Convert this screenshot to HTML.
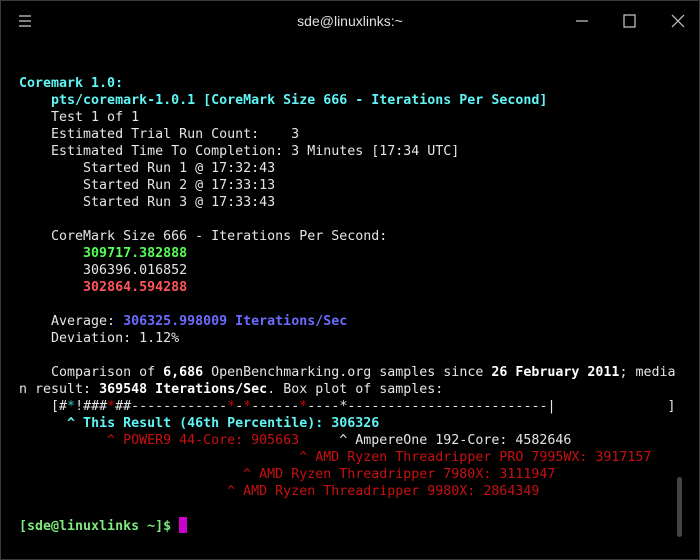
<!DOCTYPE html>
<html><head><meta charset="utf-8"><style>
html,body{margin:0;padding:0;background:#000;}
body{width:700px;height:560px;position:relative;overflow:hidden;border:1px solid #3a3a3a;box-sizing:border-box;}
.title{position:absolute;left:0;top:0;width:698px;height:40px;color:#e0e0e0;font:14px "Liberation Sans",sans-serif;}
.title .t{position:absolute;left:0;right:0;top:12px;text-align:center;}
pre{position:absolute;left:18px;top:74px;margin:0;font-family:"DejaVu Sans Mono","Liberation Mono",monospace;font-size:13.3px;line-height:17px;color:#e5e5e5;}
.c{color:#5ff5f5;font-weight:bold}
.g{color:#55ff55;font-weight:bold}
.r{color:#ff5555;font-weight:bold}
.b{color:#6b6bff;font-weight:bold}
.w{color:#fff;font-weight:bold}
.d{color:#c81010}
.p{color:#7de87d;font-weight:bold}
.cur{display:inline-block;width:8px;height:16px;background:#cc00cc;vertical-align:-3px}
.sb{position:absolute;left:676px;top:476px;width:5px;height:60px;background:#444;border-radius:3px}
</style></head><body>
<div class="title">
<svg style="position:absolute;left:17px;top:13px" width="14" height="14"><path d="M1 2H13M1 7H13M1 12H13" stroke="#ccc" stroke-width="1.2"/></svg>
<div class="t">sde@linuxlinks:~</div>
<svg style="position:absolute;left:574px;top:13px" width="14" height="14"><path d="M1 7H13" stroke="#ccc" stroke-width="1.2"/></svg>
<svg style="position:absolute;left:622px;top:13px" width="14" height="14"><rect x="1" y="1" width="11" height="12" fill="none" stroke="#ccc" stroke-width="1.2"/></svg>
<svg style="position:absolute;left:670px;top:13px" width="14" height="14"><path d="M1 1L13 13M13 1L1 13" stroke="#ccc" stroke-width="1.2"/></svg>
</div>
<pre><span class="c">Coremark 1.0:</span>
<span class="c">    pts/coremark-1.0.1 [CoreMark Size 666 - Iterations Per Second]</span>
    Test 1 of 1
    Estimated Trial Run Count:    3
    Estimated Time To Completion: 3 Minutes [17:34 UTC]
        Started Run 1 @ 17:32:43
        Started Run 2 @ 17:33:13
        Started Run 3 @ 17:33:43

    CoreMark Size 666 - Iterations Per Second:
        <span class="g">309717.382888</span>
        306396.016852
        <span class="r">302864.594288</span>

    Average: <span class="b">306325.998009 Iterations/Sec</span>
    Deviation: 1.12%

    Comparison of <span class="w">6,686</span> OpenBenchmarking.org samples since <span class="w">26 February 2011</span>; media
n result: <span class="w">369548 Iterations/Sec</span>. Box plot of samples:
    [#<span style="color:#3cc">*</span>!###<span style="color:#c00">*</span>##------------<span style="color:#c00">*</span>-<span style="color:#c00">*</span>------<span style="color:#c00">*</span>----*-------------------------|              ]
      <span class="c">^ This Result (46th Percentile): 306326</span>
           <span class="d">^ POWER9 44-Core: 905663</span>     ^ AmpereOne 192-Core: 4582646
                                   <span class="d">^ AMD Ryzen Threadripper PRO 7995WX: 3917157</span>
                            <span class="d">^ AMD Ryzen Threadripper 7980X: 3111947</span>
                          <span class="d">^ AMD Ryzen Threadripper 9980X: 2864349</span>

<span class="p">[sde@linuxlinks ~]$</span> <span class="cur"></span></pre>
<div class="sb"></div>
</body></html>
